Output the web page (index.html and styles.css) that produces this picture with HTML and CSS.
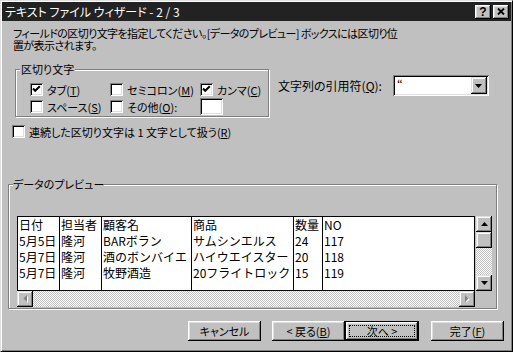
FILE: index.html
```html
<!DOCTYPE html>
<html lang="ja">
<head>
  <meta charset="UTF-8">
  <link rel="stylesheet" href="styles.css">
  <title>テキスト ファイル ウィザード - 2 / 3</title>
</head>
<body>
  <div class="window">
    <div class="titlebar">
      <span class="title">テキスト ファイル ウィザード - 2 / 3</span>
      <span class="tbtn">?</span>
      <span class="tbtn">
        <svg width="8" height="7" viewBox="0 0 8 7"><path d="M1 0.5L7 6.5M7 0.5L1 6.5" stroke="#000" stroke-width="1.8"/></svg>
      </span>
    </div>

    <div class="content">
      <p class="intro">フィールドの区切り文字を指定してください。[データのプレビュー] ボックスには区切り位<br>置が表示されます。</p>

      <div class="options">
        <fieldset class="group delims">
          <legend>区切り文字</legend>
          <div class="delim-grid">
            <label class="check"><span class="box"><svg width="13" height="13" viewBox="0 0 13 13"><path d="M3 5.5L5.2 7.8L9.8 3.2" fill="none" stroke="#000" stroke-width="2"/></svg></span><span>タブ(<u>T</u>)</span></label>
            <label class="check"><span class="box"></span><span>セミコロン(<u>M</u>)</span></label>
            <label class="check"><span class="box"><svg width="13" height="13" viewBox="0 0 13 13"><path d="M3 5.5L5.2 7.8L9.8 3.2" fill="none" stroke="#000" stroke-width="2"/></svg></span><span>カンマ(<u>C</u>)</span></label>
            <label class="check"><span class="box"></span><span>スペース(<u>S</u>)</span></label>
            <label class="check"><span class="box"></span><span>その他(<u>O</u>):</span></label>
            <span class="field other"></span>
          </div>
        </fieldset>

        <div class="quote">
          <span>文字列の引用符(<u>Q</u>):</span>
          <div class="combo">
            <span class="combo-value">“</span>
            <span class="sbtn combo-btn"><svg width="7" height="4" viewBox="0 0 7 4"><path d="M0 0H7L3.5 4z"/></svg></span>
          </div>
        </div>
      </div>

      <label class="check consec"><span class="box"></span><span>連続した区切り文字は 1 文字として扱う(<u>R</u>)</span></label>

      <fieldset class="group preview">
        <legend>データのプレビュー</legend>
        <div class="preview-box">
          <div class="sheet">
            <div class="col c1"><div>日付</div><div>5月5日</div><div>5月7日</div><div>5月7日</div></div>
            <div class="col c2"><div>担当者</div><div>隆河</div><div>隆河</div><div>隆河</div></div>
            <div class="col c3"><div>顧客名</div><div>BARボラン</div><div>酒のボンバイエ</div><div>牧野酒造</div></div>
            <div class="col c4"><div>商品</div><div>サムシンエルス</div><div>ハイウエイスター</div><div>20フライトロック</div></div>
            <div class="col c5"><div>数量</div><div>24</div><div>20</div><div>15</div></div>
            <div class="col c6"><div>NO</div><div>117</div><div>118</div><div>119</div></div>
          </div>

          <div class="vscroll">
            <span class="sbtn"><svg width="7" height="4" viewBox="0 0 7 4"><path d="M3.5 0L7 4H0z"/></svg></span>
            <span class="sbtn"></span>
            <span class="track"></span>
            <span class="sbtn"><svg width="7" height="4" viewBox="0 0 7 4"><path d="M0 0H7L3.5 4z"/></svg></span>
          </div>

          <div class="hscroll">
            <span class="sbtn"><svg width="5" height="8" viewBox="0 0 5 8"><path d="M4 0V7L0.5 3.5z" fill="#fff" transform="translate(1 1)"/><path d="M4 0V7L0.5 3.5z" fill="#808080"/></svg></span>
            <span class="track"></span>
            <span class="sbtn"><svg width="5" height="8" viewBox="0 0 5 8"><path d="M0 0V7L3.5 3.5z" fill="#fff" transform="translate(1 1)"/><path d="M0 0V7L3.5 3.5z" fill="#808080"/></svg></span>
          </div>
        </div>
      </fieldset>

      <div class="buttons">
        <button class="btn">キャンセル</button>
        <button class="btn back">&lt; 戻る(<u>B</u>)</button>
        <button class="btn default">次へ &gt;</button>
        <button class="btn finish">完了(<u>F</u>)</button>
      </div>
    </div>
  </div>
</body>
</html>
```

FILE: styles.css
```css
body {
  margin: 0;
  background-color: #c0c0c0;
  font-family: "Noto Sans CJK JP", "Liberation Sans", sans-serif;
  font-size: 11px;
  line-height: 12px;
  font-feature-settings: "palt";
  text-autospace: no-autospace;
  color: #000;
}

u {
  text-underline-offset: 1px;
}

.window {
  width: 513px;
  height: 352px;
  box-sizing: border-box;
  padding: 1px;
  border: 1px solid;
  border-color: #dfdfdf #000 #000 #dfdfdf;
  box-shadow: inset 1px 1px #fff, inset -1px -1px #808080;
  background-color: #c0c0c0;
}

/* title bar */
.titlebar {
  height: 19px;
  display: flex;
  align-items: center;
  gap: 2px;
  padding: 0 2px 0 3px;
  background-color: #222;
  color: #fff;
  font-size: 12px;
}

.title {
  flex: 1;
  padding-top: 1px;
}

.tbtn {
  width: 16px;
  height: 14px;
  display: flex;
  align-items: center;
  justify-content: center;
  background-color: #c0c0c0;
  color: #000;
  font-family: "Liberation Sans", sans-serif;
  font-weight: bold;
  font-size: 12px;
  box-shadow: inset -1px -1px #000, inset 1px 1px #fff, inset -2px -2px #808080, inset 2px 2px #dfdfdf;
}

/* shared 3d pieces */
.sbtn {
  width: 16px;
  height: 16px;
  display: flex;
  align-items: center;
  justify-content: center;
  box-sizing: border-box;
  background-color: #c0c0c0;
  box-shadow: inset -1px -1px #000, inset 1px 1px #dfdfdf, inset -2px -2px #808080, inset 2px 2px #fff;
}

.field {
  background-color: #fff;
  box-shadow: inset 1px 1px #808080, inset -1px -1px #fff, inset 2px 2px #000, inset -2px -2px #dfdfdf;
}

.track {
  flex: 1;
  background-color: #c0c0c0;
  background-image: conic-gradient(#fff 25%, #c0c0c0 0 50%, #fff 0 75%, #c0c0c0 0);
  background-size: 2px 2px;
}

.content {
  padding: 6px 0 0 6px;
}

.intro {
  margin: 0 0 0 5px;
  letter-spacing: -0.6px;
}

.options {
  display: flex;
  margin-top: 12px;
  margin-left: 7px;
}

.group {
  margin: 0;
  padding: 0 4px;
  border: 1px solid #808080;
  box-shadow: inset 1px 1px #fff, 1px 1px #fff;
  min-width: 0;
}

.group legend {
  padding: 0 1px;
  background-color: #c0c0c0;
}

.delims {
  width: 254px;
  box-sizing: border-box;
  padding-top: 8px;
  padding-bottom: 3px;
}

.delim-grid {
  display: grid;
  grid-template-columns: 80px 90px auto;
  grid-auto-rows: 13px;
  row-gap: 4px;
  align-items: center;
  margin-left: 10px;
}

.check {
  display: flex;
  align-items: center;
  height: 13px;
  white-space: nowrap;
}

.box {
  width: 13px;
  height: 13px;
  flex: none;
  margin-right: 4px;
  background-color: #fff;
  box-shadow: inset 1px 1px #808080, inset -1px -1px #fff, inset 2px 2px #000, inset -2px -2px #dfdfdf;
}

.box svg {
  display: block;
}

.other {
  width: 23px;
  height: 17px;
}

.quote {
  display: flex;
  align-items: center;
  gap: 11px;
  margin: 12px 0 0 9px;
  align-self: flex-start;
  font-size: 12px;
}

.combo {
  width: 96px;
  height: 21px;
  box-sizing: border-box;
  padding: 2px;
  display: flex;
  background-color: #fff;
  box-shadow: inset 1px 1px #808080, inset -1px -1px #fff, inset 2px 2px #000, inset -2px -2px #dfdfdf;
}

.combo-value {
  flex: 1;
  padding: 1px 0 0 2px;
}

.combo-btn {
  height: 17px;
}

.consec {
  margin: 8px 0 0 4px;
}

/* preview */
.preview {
  width: 489px;
  box-sizing: border-box;
  margin-top: 40px;
  padding-top: 26px;
  padding-bottom: 1px;
}

.preview legend {
  padding: 0;
}

.preview-box {
  display: grid;
  grid-template-columns: 458px 17px;
  grid-template-rows: 75px 16px;
  margin-left: 4px;
}

.sheet {
  display: flex;
  border: 1px solid #000;
  background-color: #fff;
  font-size: 12px;
  font-feature-settings: normal;
  white-space: nowrap;
  overflow: hidden;
}

.col {
  box-sizing: border-box;
  border-right: 1px solid #000;
  overflow: hidden;
}

.col div {
  height: 16px;
  line-height: 16px;
  padding-left: 1px;
}

.c1 { width: 42px; }
.c2 { width: 42px; }
.c3 { width: 90px; }
.c4 { width: 102px; }
.c5 { width: 29px; }
.c6 { flex: 1; border-right: none; }

.vscroll {
  display: flex;
  flex-direction: column;
  margin-left: 1px;
}

.hscroll {
  display: flex;
}

/* buttons */
.buttons {
  display: flex;
  justify-content: flex-end;
  margin: 12px 7px 0 0;
}

.btn {
  width: 73px;
  height: 20px;
  padding: 0;
  border: none;
  background-color: #c0c0c0;
  font: inherit;
  font-feature-settings: "palt";
  color: #000;
  box-shadow: inset -1px -1px #000, inset 1px 1px #fff, inset -2px -2px #808080, inset 2px 2px #dfdfdf;
}

.back {
  margin-left: 11px;
}

.default {
  width: 74px;
  border: 1px solid #000;
  outline: 1px dotted #000;
  outline-offset: -5px;
}

.finish {
  margin-left: 12px;
}
```
